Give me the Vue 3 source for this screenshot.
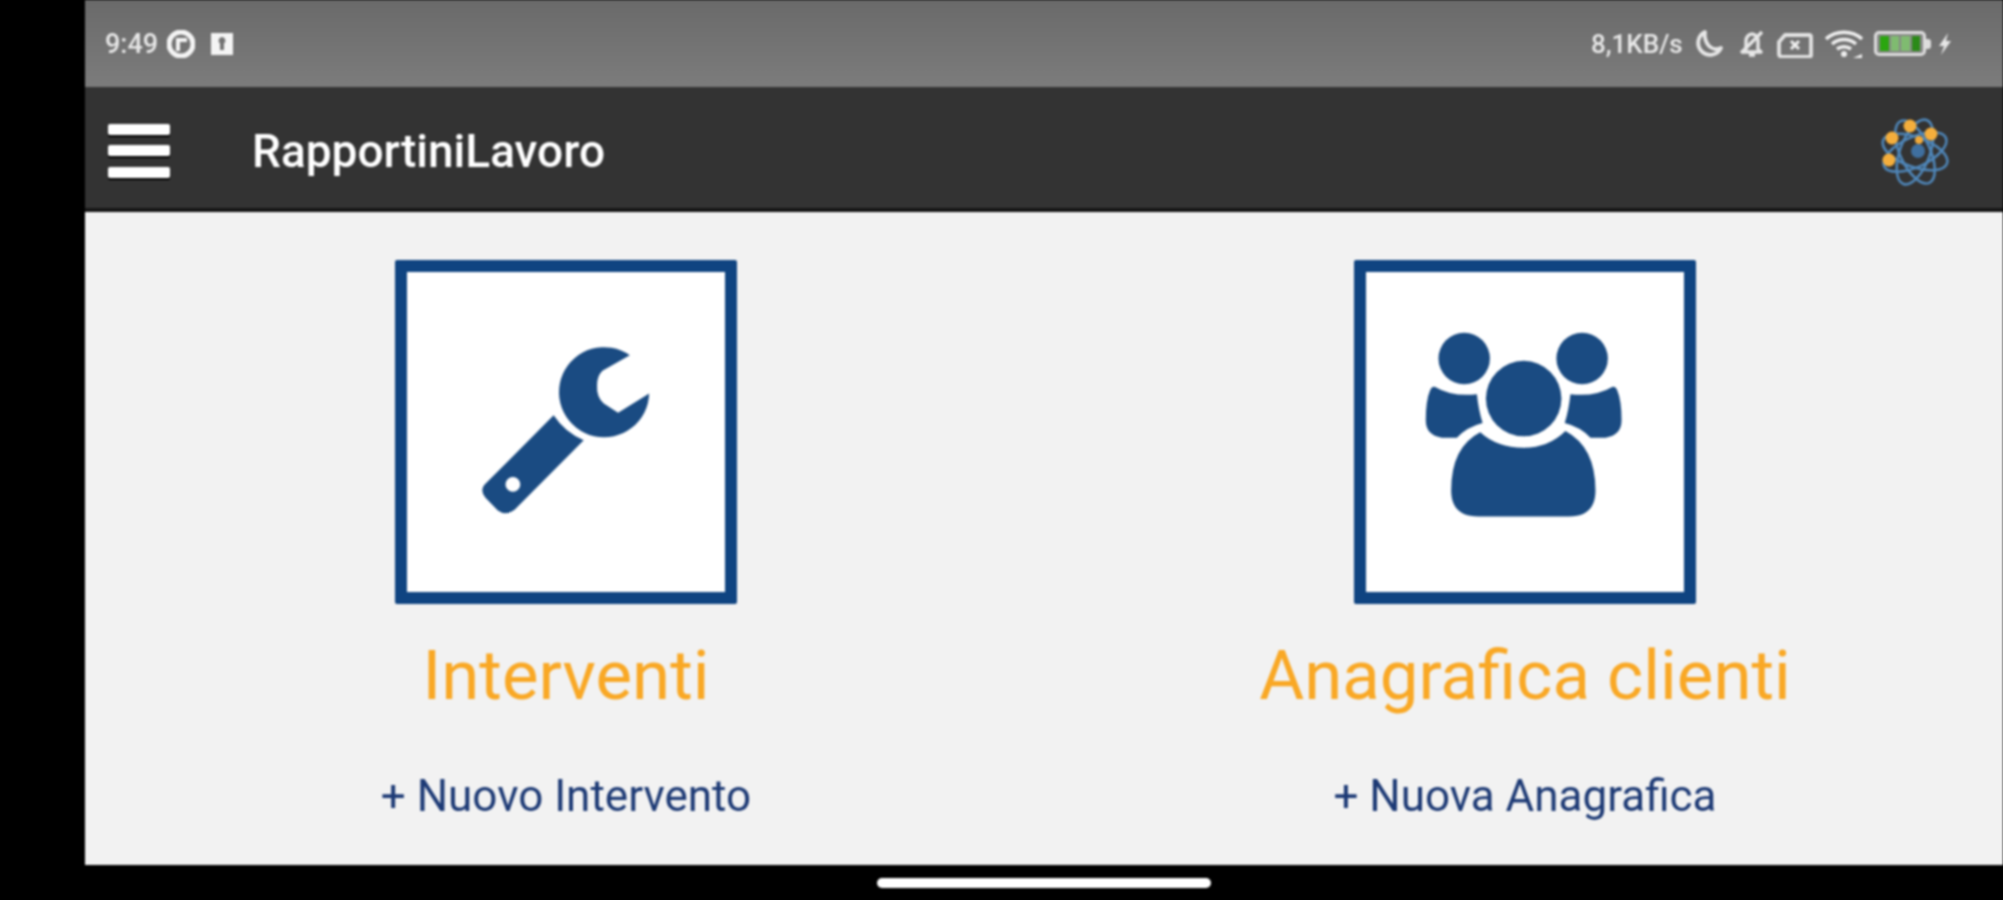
<template>
  <div class="screen">
    <div class="device">
      <div class="status-bar">
        <div class="status-left">
          <span class="clock">9:49</span>
          <svg class="ic-p" viewBox="0 0 28 28">
            <circle cx="14" cy="14" r="12" fill="none" stroke="#f4f4f4" stroke-width="5" />
            <path d="M9 21V8h11v4h-7v9z" fill="#f4f4f4" />
          </svg>
          <svg class="ic-note" viewBox="0 0 24 24">
            <path fill-rule="evenodd" fill="#f4f4f4" d="M1 1h22v22H1zM12 5a3.500 3.500 0 0 0-2 6.300V18h4v-6.700A3.500 3.500 0 0 0 12 5z" />
          </svg>
        </div>
        <div class="status-right">
          <span class="speed">8,1KB/s</span>
          <svg class="ic-moon" viewBox="0 0 30 30">
            <path d="M11 3a12 12 0 1 0 16 16c-4 2-9 1-12-2-3-3-5-9-4-14z" fill="none" stroke="#e6e6e6" stroke-width="3.800" stroke-linejoin="round" />
          </svg>
          <svg class="ic-bell" viewBox="0 0 30 30">
            <path d="M9 20v-8c0-4 3-7 6-7s6 3 6 7v8l3 3H6z M12 26h6" fill="none" stroke="#e6e6e6" stroke-width="3.400" stroke-linejoin="round" />
            <path d="M4 24L25 3" stroke="#e6e6e6" stroke-width="3.400" />
          </svg>
          <svg class="ic-screen" viewBox="0 0 36 28">
            <path d="M8 5h24a2 2 0 0 1 2 2v18a2 2 0 0 1-2 2H5a3 3 0 0 1-3-3v-12z" fill="none" stroke="#e2e2e2" stroke-width="3.800" stroke-linejoin="round" />
            <path d="M14 11l8 8M22 11l-8 8" stroke="#f0f0f0" stroke-width="3" />
          </svg>
          <svg class="ic-wifi" viewBox="0 0 40 30">
            <g fill="none" stroke="#efefef" stroke-width="3.600">
              <path d="M2 10c10-9 26-9 36 0" />
              <path d="M8 15c7-6 17-6 24 0" />
              <path d="M13 20c4-3 10-3 14 0" />
            </g>
            <circle cx="20" cy="25" r="3" fill="#efefef" />
            <path d="M29 29l9-4v4z" fill="#efefef" />
          </svg>
          <div class="battery">
            <div class="battery-body">
              <span class="battery-fill"></span>
              <span class="battery-fill faint"></span>
              <span class="battery-fill faint"></span>
              <span class="battery-fill dark"></span>
            </div>
            <span class="battery-tip"></span>
          </div>
          <svg class="ic-bolt" viewBox="0 0 14 24">
            <path d="M10 1L1 14h5l-3 9 10-14H8z" fill="#e6e6e6" />
          </svg>
        </div>
      </div>

      <header class="app-bar">
        <button class="menu-btn" aria-label="Menu">
          <span></span>
          <span></span>
          <span></span>
        </button>
        <h1 class="app-title">RapportiniLavoro</h1>
        <svg class="logo" viewBox="0 0 76 76">
          <g fill="none" stroke="#4f86b8" stroke-width="2.600">
            <ellipse cx="39" cy="39" rx="34" ry="15" transform="rotate(20 39 39)" />
            <ellipse cx="39" cy="39" rx="34" ry="15" transform="rotate(65 39 39)" />
            <ellipse cx="39" cy="39" rx="34" ry="15" transform="rotate(110 39 39)" />
            <ellipse cx="39" cy="39" rx="34" ry="15" transform="rotate(155 39 39)" />
          </g>
          <circle cx="42" cy="38" r="7" fill="#3f6f9f" />
          <circle cx="43" cy="27" r="4" fill="#f0a93a" />
          <circle cx="34" cy="13" r="6.500" fill="#f4ae3c" />
          <circle cx="16" cy="25" r="6.500" fill="#f4ae3c" />
          <circle cx="55" cy="21" r="6.500" fill="#f4ae3c" />
          <circle cx="13" cy="47" r="6.500" fill="#f4ae3c" />
        </svg>
      </header>

      <main class="home">
        <section v-for="item in sections" :key="item.title" class="tile">
          <div class="tile-box">
            <svg v-if="item.icon === 'wrench'" class="tile-icon" viewBox="83 68 952 954">
              <path d="M750 315L668 362Q652 378 652 405Q650 440 672 460L715 487L808 430A135 135 0 1 1 750 315Z" />
              <path fill-rule="evenodd" d="M522 495Q555 545 612 570L405 778Q380 798 355 780L318 742Q298 718 320 698ZM400 680a22 22 0 1 0 .01 0Z" />
            </svg>
            <svg v-else class="tile-icon" viewBox="83 68 952 954">
              <circle cx="377" cy="325" r="77" />
              <circle cx="730" cy="325" r="77" />
              <circle cx="555" cy="445" r="113" />
              <path d="M425 546Q475 592 555 592Q630 592 680 542Q770 590 770 720Q770 798 690 798H420Q338 798 338 720Q338 590 425 546Z" />
              <path d="M290 410Q340 440 415 432Q420 480 432 518Q385 530 355 562H310Q262 555 262 510Q262 450 275 420Q280 408 290 410Z" />
              <path d="M290 410Q340 440 415 432Q420 480 432 518Q385 530 355 562H310Q262 555 262 510Q262 450 275 420Q280 408 290 410Z" transform="matrix(-1 0 0 1 1110 0)" />
            </svg>
          </div>
          <h2 class="tile-title">{{ item.title }}</h2>
          <a class="tile-link">{{ item.link }}</a>
        </section>
      </main>

      <footer class="nav-bar">
        <span class="nav-pill"></span>
      </footer>
    </div>
  </div>
</template>

<script setup>
const sections = [
  { title: 'Interventi', link: '+ Nuovo Intervento', icon: 'wrench' },
  { title: 'Anagrafica clienti', link: '+ Nuova Anagrafica', icon: 'people' }
]
</script>

<style>
html, body { margin: 0; background: #000; }
</style>

<style scoped>
.screen { width: 2003px; height: 900px; background: #000; font-family: Roboto, "Liberation Sans", sans-serif; overflow: hidden; }
.device { margin-left: 85px; height: 900px; display: flex; flex-direction: column; filter: blur(0.8px); }

.status-bar { height: 87px; flex: none; background: linear-gradient(#6a6a6a, #7c7c7c); display: flex; align-items: center; justify-content: space-between; padding: 0 51px 0 20px; color: #e8e8e8; }
.status-left, .status-right { display: flex; align-items: center; }
.clock { font-size: 27px; width: 62px; font-weight: 500; }
.ic-p { width: 28px; height: 28px; }
.ic-note { width: 24px; height: 24px; margin-left: 15px; }
.speed { font-size: 26px; width: 103px; white-space: nowrap; font-weight: 500; }
.ic-moon { width: 30px; height: 30px; }
.ic-bell { width: 30px; height: 30px; margin-left: 13px; }
.ic-screen { width: 36px; height: 28px; margin-left: 10px; }
.ic-wifi { width: 40px; height: 30px; margin-left: 11px; }
.battery { display: flex; align-items: center; margin-left: 10px; }
.battery-body { width: 52px; height: 25px; box-sizing: border-box; border: 3px solid #ddd; border-radius: 5px; padding: 2px 3px; display: flex; gap: 2px; background: #888; }
.battery-fill { flex: 1; background: #2aa60f; }
.battery-fill.faint { background: #7fbb70; }
.battery-fill.dark { background: #2b8a18; }
.battery-tip { width: 5px; height: 10px; background: #ddd; border-radius: 0 3px 3px 0; }
.ic-bolt { width: 14px; height: 24px; margin-left: 7px; }

.app-bar { height: 115px; padding: 6px 51px 0 23px; flex: none; background: #333; border-bottom: 4px solid #161616; display: flex; align-items: center; color: #fff; }
.menu-btn { width: 62px; height: 54px; border: none; background: transparent; padding: 0; display: flex; flex-direction: column; justify-content: space-between; }
.menu-btn span { display: block; height: 11px; border-radius: 2px; background: #fff; box-shadow: 0 2px 1px #000; }
.app-title { margin: 0 0 0 82px; flex: 1; font-size: 46px; font-weight: 500; }
.logo { width: 76px; height: 76px; }

.home { flex: 1; background: #f2f2f2; display: grid; grid-template-columns: 1fr 1fr; }
.tile { display: flex; flex-direction: column; align-items: center; padding: 48px 0 0 3px; }
.tile-box { width: 342px; height: 344px; box-sizing: border-box; border: 12px solid #0f4481; border-radius: 2px; background: #fff; }
.tile-icon { display: block; width: 100%; height: 100%; fill: #1a4b82; }
.tile-title { margin: 32px 0 0; font-size: 69px; line-height: 80px; font-weight: 400; color: #f9a825; }
.tile-link { margin-top: 55px; font-size: 44px; line-height: 50px; color: #1d3a75; }

.nav-bar { height: 35px; flex: none; background: #000; display: flex; justify-content: center; align-items: center; }
.nav-pill { width: 334px; height: 10px; border-radius: 5px; background: #fff; }
</style>
